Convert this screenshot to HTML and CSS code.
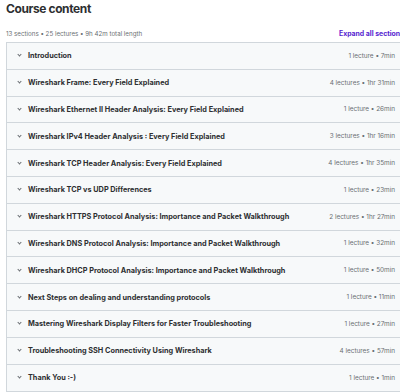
FILE: index.html
```
<!DOCTYPE html>
<html>
  <head>
    <meta charset='utf-8'/>
    <link rel="stylesheet" href="styles.css">
  </head>
  <body>
    <h2 class='heading'>Course content</h2>

    <div class='summary'>
      <span class='totals'>13 sections • 25 lectures • 9h 42m total length</span>
      <span class='expand'>Expand all sections</span>
    </div>

    <div class='sections'>
      <div class='section'><span class='chevron'></span><span class='title'>Introduction</span><span class='meta'>1 lecture • 7min</span></div>
      <div class='section'><span class='chevron'></span><span class='title'>Wireshark Frame: Every Field Explained</span><span class='meta'>4 lectures • 1hr 31min</span></div>
      <div class='section'><span class='chevron'></span><span class='title'>Wireshark Ethernet II Header Analysis: Every Field Explained</span><span class='meta'>1 lecture • 26min</span></div>
      <div class='section'><span class='chevron'></span><span class='title'>Wireshark IPv4 Header Analysis : Every Field Explained</span><span class='meta'>3 lectures • 1hr 16min</span></div>
      <div class='section'><span class='chevron'></span><span class='title'>Wireshark TCP Header Analysis: Every Field Explained</span><span class='meta'>4 lectures • 1hr 35min</span></div>
      <div class='section'><span class='chevron'></span><span class='title'>Wireshark TCP vs UDP Differences</span><span class='meta'>1 lecture • 23min</span></div>
      <div class='section'><span class='chevron'></span><span class='title'>Wireshark HTTPS Protocol Analysis: Importance and Packet Walkthrough</span><span class='meta'>2 lectures • 1hr 27min</span></div>
      <div class='section'><span class='chevron'></span><span class='title'>Wireshark DNS Protocol Analysis: Importance and Packet Walkthrough</span><span class='meta'>1 lecture • 32min</span></div>
      <div class='section'><span class='chevron'></span><span class='title'>Wireshark DHCP Protocol Analysis: Importance and Packet Walkthrough</span><span class='meta'>1 lecture • 50min</span></div>
      <div class='section'><span class='chevron'></span><span class='title'>Next Steps on dealing and understanding protocols</span><span class='meta'>1 lecture • 11min</span></div>
      <div class='section'><span class='chevron'></span><span class='title'>Mastering Wireshark Display Filters for Faster Troubleshooting</span><span class='meta'>1 lecture • 27min</span></div>
      <div class='section'><span class='chevron'></span><span class='title'>Troubleshooting SSH Connectivity Using Wireshark</span><span class='meta'>4 lectures • 57min</span></div>
      <div class='section'><span class='chevron'></span><span class='title'>Thank You :-)</span><span class='meta'>1 lecture • 1min</span></div>
    </div>
  </body>
</html>
```

FILE: styles.css
```
* {
  font-family: 'Inter', sans-serif;
  box-sizing: border-box;
}

html, body {
  overflow: hidden;
}

body {
  margin: 0;
  padding: 0 0 0 6px;
  width: 404px;
  color: #2d2f31;
  background: #fff;
}

.heading {
  margin: 0.5px 0 0;
  font-size: 12px;
  font-weight: 700;
  letter-spacing: -0.4px;
  line-height: 16px;
}

.summary {
  display: flex;
  justify-content: space-between;
  align-items: center;
  margin-top: 9.5px;
  height: 14px;
}

.totals {
  font-size: 6.2px;
  color: #6a6f73;
}

.expand {
  font-size: 6.9px;
  font-weight: 700;
  color: #5624d0;
  white-space: nowrap;
}

.sections {
  margin-top: 2px;
  border: 1px solid #d1d7dc;
  border-right: none;
}

.section {
  display: flex;
  align-items: center;
  height: 26.8px;
  padding: 0 9px 0 10px;
  background: #f7f9fa;
  border-bottom: 1px solid #d1d7dc;
}

.section:last-child {
  border-bottom: none;
}

.chevron {
  width: 3px;
  height: 3px;
  border-right: 0.8px solid #6a6f73;
  border-bottom: 0.8px solid #6a6f73;
  transform: rotate(45deg);
  margin: -2px 7px 0 1px;
}

.title {
  flex: 1;
  font-size: 7.3px;
  font-weight: 700;
  white-space: nowrap;
}

.meta {
  font-size: 6.4px;
  color: #6a6f73;
  white-space: nowrap;
}
```
